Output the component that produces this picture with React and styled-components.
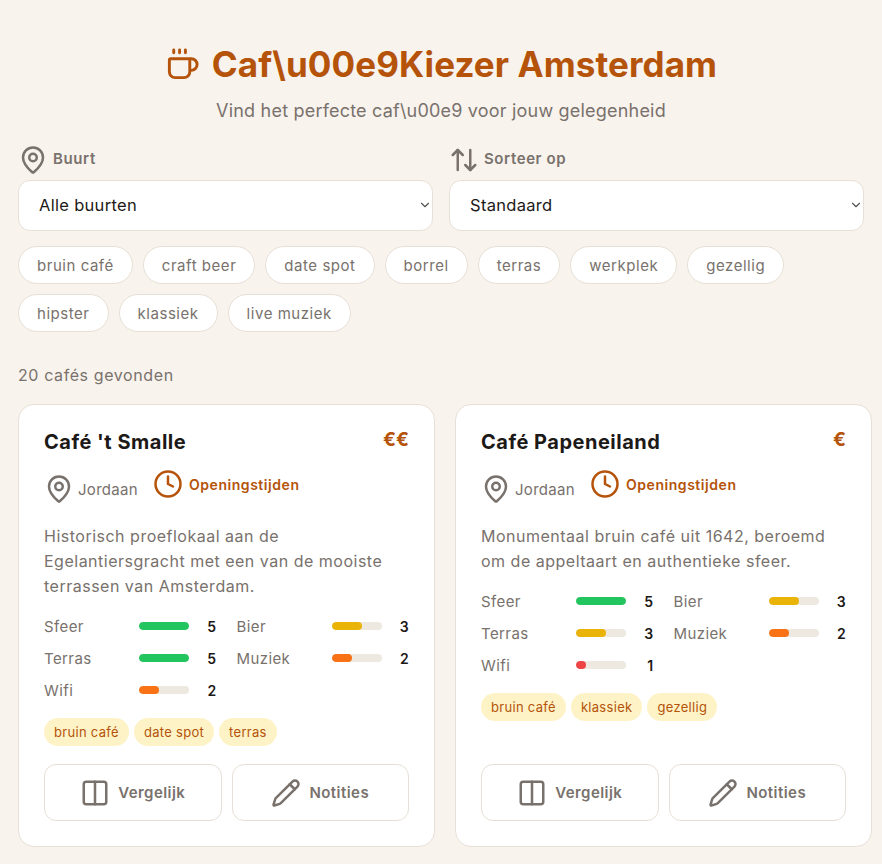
import React from "react";
import styled, { createGlobalStyle } from "styled-components";
import { Coffee, MapPin, ArrowUpDown, Clock, Columns2, Pencil, ChevronDown } from "lucide-react";

const GlobalStyle = createGlobalStyle`
  * { box-sizing: border-box; }
  html, body { margin: 0; padding: 0; }
  body {
    background: #f8f3ed;
    font-family: Inter, "Liberation Sans", sans-serif;
    color: #1c1917;
  }
`;

const Page = styled.div`
  padding: 39px 10px 17px 18px;
`;

const Header = styled.header`
  text-align: center;
  margin-bottom: 21px;
  margin-left: -18px;
  margin-right: -10px;
`;

const Title = styled.h1`
  margin: 0;
  height: 50px;
  display: flex;
  align-items: center;
  justify-content: center;
  gap: 12px;
  font-size: 35px;
  letter-spacing: 0.1px;
  font-weight: 700;
  color: #b45309;
  svg { flex: none; }
`;

const Subtitle = styled.p`
  margin: 9px 0 0;
  font-size: 18px;
  letter-spacing: 0.2px;
  line-height: 26px;
  color: #78716c;
`;

const Filters = styled.div`
  display: grid;
  grid-template-columns: 1fr 1fr;
  gap: 16px;
  width: 846px;
`;

const Label = styled.label`
  display: flex;
  align-items: flex-start;
  gap: 5px;
  height: 30px;
  margin-bottom: 5px;
  font-size: 15px;
  letter-spacing: 0.6px;
  line-height: 28px;
  font-weight: 600;
  color: #78716c;
`;

const SelectBox = styled.div`
  position: relative;
  svg {
    position: absolute;
    right: 1px;
    top: 18px;
    color: #57534e;
    pointer-events: none;
  }
`;

const Select = styled.select`
  appearance: none;
  display: block;
  width: 100%;
  height: 51px;
  padding: 0 20px 2px;
  background: #fff;
  border: 1px solid #e7e0d6;
  border-radius: 12px;
  font-family: inherit;
  font-size: 16.5px;
  letter-spacing: 0.3px;
  color: #1c1917;
`;

const Chips = styled.div`
  display: flex;
  flex-wrap: wrap;
  gap: 10px;
  margin-top: 15px;
  width: 846px;
`;

const Chip = styled.button`
  height: 38px;
  padding: 0 18px;
  background: #fff;
  border: 1px solid #e7e0d6;
  border-radius: 19px;
  font-family: inherit;
  font-size: 15px;
  letter-spacing: 0.54px;
  color: #78716c;
`;

const Count = styled.p`
  margin: 31px 0 17px;
  font-size: 16px;
  letter-spacing: 0.6px;
  line-height: 24px;
  color: #78716c;
`;

const Cards = styled.div`
  display: grid;
  grid-template-columns: 417px 417px;
  gap: 20px;
`;

const Card = styled.article`
  display: flex;
  flex-direction: column;
  height: 443px;
  padding: 25px;
  background: #fff;
  border: 1px solid #e7e0d6;
  border-radius: 16px;
`;

const CardTop = styled.div`
  display: flex;
  justify-content: space-between;
  align-items: flex-start;
`;

const CardName = styled.h2`
  margin: 0;
  font-size: 20px;
  letter-spacing: 0.5px;
  line-height: 24px;
  font-weight: 700;
  color: #1c1917;
`;

const Price = styled.span`
  font-size: 19px;
  line-height: 20px;
  font-weight: 700;
  color: #b45309;
`;

const Meta = styled.div`
  display: flex;
  align-items: flex-start;
  gap: 15px;
  margin-top: 15px;
`;

const Place = styled.span`
  display: flex;
  align-items: center;
  gap: 4px;
  margin-top: 5px;
  font-size: 15px;
  letter-spacing: 0.3px;
  color: #78716c;
`;

const Hours = styled.span`
  display: flex;
  align-items: center;
  gap: 6px;
  font-size: 14px;
  letter-spacing: 0.55px;
  font-weight: 600;
  color: #b45309;
`;

const Description = styled.p`
  margin: 20px 0 0;
  font-size: 16px;
  letter-spacing: 0.5px;
  line-height: 25px;
  color: #78716c;
`;

const Scores = styled.div`
  display: grid;
  grid-template-columns: 1fr 1fr;
  column-gap: 20px;
  row-gap: 8px;
  margin-top: 15px;
`;

const Score = styled.div`
  display: flex;
  align-items: center;
  height: 24px;
  font-size: 15px;
  letter-spacing: 0.4px;
  color: #78716c;
`;

const ScoreName = styled.span`
  width: 95px;
`;

const Track = styled.span`
  width: 50px;
  height: 8px;
  background: #ede8e0;
  border-radius: 4px;
  overflow: hidden;
`;

const Fill = styled.span`
  display: block;
  height: 100%;
  border-radius: 4px;
  background: ${(props) => props.$color};
`;

const ScoreValue = styled.span`
  margin-left: auto;
  font-size: 14px;
  font-weight: 600;
  color: #1c1917;
`;

const Tags = styled.div`
  display: flex;
  gap: 5px;
  margin-top: 16px;
`;

const Tag = styled.span`
  height: 28px;
  line-height: 28px;
  padding: 0 10px;
  background: #fef3c7;
  border-radius: 14px;
  font-size: 13px;
  letter-spacing: 0.3px;
  color: #b45309;
`;

const Actions = styled.div`
  display: flex;
  gap: 10px;
  margin-top: auto;
`;

const Action = styled.button`
  flex: 1;
  height: 57px;
  display: flex;
  align-items: center;
  justify-content: center;
  gap: 8px;
  background: #fff;
  border: 1px solid #e7e0d6;
  border-radius: 12px;
  font-family: inherit;
  font-size: 15px;
  letter-spacing: 0.45px;
  font-weight: 600;
  color: #78716c;
`;

const filterTags = [
  "bruin café", "craft beer", "date spot", "borrel", "terras", "werkplek",
  "gezellig", "hipster", "klassiek", "live muziek",
];

const cafes = [
  {
    name: "Café 't Smalle",
    price: "€€",
    area: "Jordaan",
    text: "Historisch proeflokaal aan de Egelantiersgracht met een van de mooiste terrassen van Amsterdam.",
    scores: [["Sfeer", 5], ["Bier", 3], ["Terras", 5], ["Muziek", 2], ["Wifi", 2]],
    tags: ["bruin café", "date spot", "terras"],
  },
  {
    name: "Café Papeneiland",
    price: "€",
    area: "Jordaan",
    text: "Monumentaal bruin café uit 1642, beroemd om de appeltaart en authentieke sfeer.",
    scores: [["Sfeer", 5], ["Bier", 3], ["Terras", 3], ["Muziek", 2], ["Wifi", 1]],
    tags: ["bruin café", "klassiek", "gezellig"],
  },
];

const scoreColor = (value) => {
  if (value >= 4) return "#22c55e";
  if (value === 3) return "#eab308";
  if (value === 2) return "#f97316";
  return "#ef4444";
};

function CafeCard({ cafe }) {
  return (
    <Card>
      <CardTop>
        <CardName>{cafe.name}</CardName>
        <Price>{cafe.price}</Price>
      </CardTop>
      <Meta>
        <Place>
          <MapPin size={30} strokeWidth={2} />
          {cafe.area}
        </Place>
        <Hours>
          <Clock size={30} strokeWidth={2} />
          Openingstijden
        </Hours>
      </Meta>
      <Description>{cafe.text}</Description>
      <Scores>
        {cafe.scores.map(([name, value]) => (
          <Score key={name}>
            <ScoreName>{name}</ScoreName>
            <Track>
              <Fill $color={scoreColor(value)} style={{ width: `${value * 20}%` }} />
            </Track>
            <ScoreValue>{value}</ScoreValue>
          </Score>
        ))}
      </Scores>
      <Tags>
        {cafe.tags.map((tag) => (
          <Tag key={tag}>{tag}</Tag>
        ))}
      </Tags>
      <Actions>
        <Action>
          <Columns2 size={30} strokeWidth={2} />
          Vergelijk
        </Action>
        <Action>
          <Pencil size={30} strokeWidth={2} />
          Notities
        </Action>
      </Actions>
    </Card>
  );
}

export default function App() {
  return (
    <Page>
      <GlobalStyle />
      <Header>
        <Title>
          <Coffee size={35} strokeWidth={2} />
          Caf\u00e9Kiezer Amsterdam
        </Title>
        <Subtitle>Vind het perfecte caf\u00e9 voor jouw gelegenheid</Subtitle>
      </Header>
      <Filters>
        <div>
          <Label>
            <MapPin size={30} strokeWidth={2} />
            Buurt
          </Label>
          <SelectBox>
            <Select defaultValue="all">
              <option value="all">Alle buurten</option>
            </Select>
            <ChevronDown size={14} strokeWidth={2} />
          </SelectBox>
        </div>
        <div>
          <Label>
            <ArrowUpDown size={30} strokeWidth={2} />
            Sorteer op
          </Label>
          <SelectBox>
            <Select defaultValue="default">
              <option value="default">Standaard</option>
            </Select>
            <ChevronDown size={14} strokeWidth={2} />
          </SelectBox>
        </div>
      </Filters>
      <Chips>
        {filterTags.map((tag) => (
          <Chip key={tag}>{tag}</Chip>
        ))}
      </Chips>
      <Count>20 cafés gevonden</Count>
      <Cards>
        {cafes.map((cafe) => (
          <CafeCard key={cafe.name} cafe={cafe} />
        ))}
      </Cards>
    </Page>
  );
}
